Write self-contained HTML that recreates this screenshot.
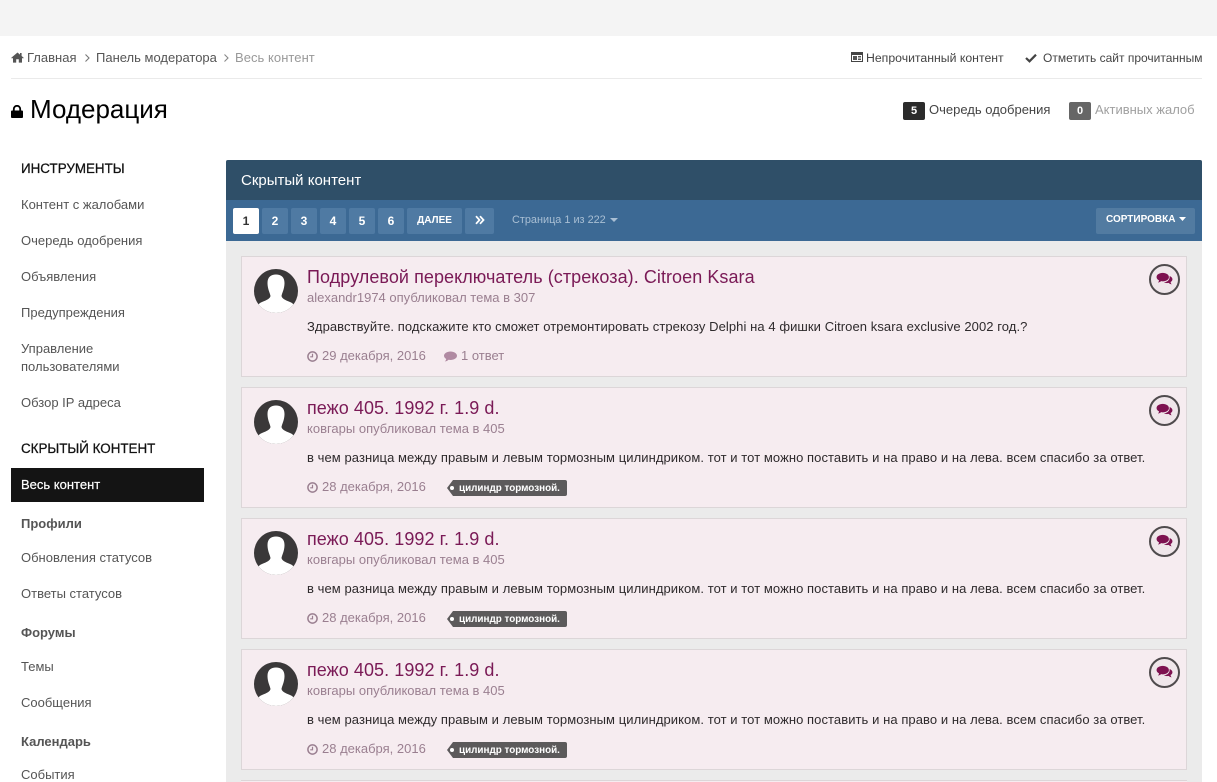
<!DOCTYPE html>
<html lang="ru">
<head>
<meta charset="utf-8">
<title>Модерация</title>
<style>
html,body{margin:0;padding:0;background:#fff;width:1217px;height:782px;overflow:hidden}
#w{position:relative;width:1217px;height:782px;overflow:hidden;font-family:"Liberation Sans",Arial,sans-serif;font-size:13px;color:#333}
.a{position:absolute;white-space:nowrap}
svg{position:absolute;display:block}
.nav{left:21px;font-size:13px;line-height:18px;color:#555}
.navh{left:21px;font-size:13.4px;line-height:18px;color:#111;-webkit-text-stroke:.25px #111}
.navb{left:21px;font-size:13px;line-height:18px;font-weight:bold;color:#555}
.pg{position:absolute;top:208px;height:26px;line-height:26px;background:#4f7aa3;border-radius:2px;color:#fff;font-weight:bold;font-size:12px;text-align:center}
.item{position:absolute;left:241px;width:944px;height:119px;background:#f6ecf0;border:1px solid #dcd6d8}
.item .t{position:absolute;left:65px;top:9px;font-size:18px;letter-spacing:.06px;line-height:22px;color:#7a1a56;white-space:nowrap}
.item .m{position:absolute;left:65px;top:33px;font-size:13px;line-height:16px;color:#9a7f90;white-space:nowrap}
.item .x{position:absolute;left:65px;top:61px;font-size:13px;letter-spacing:.07px;line-height:18px;color:#2e2a2c;white-space:nowrap}
.item .d{position:absolute;left:65px;top:90px;font-size:13px;line-height:18px;color:#9a7f90;white-space:nowrap}
.tag{position:absolute;left:211px;top:92px;height:16px;line-height:16px;width:114px;background:#5c5a5b;border-radius:0 2px 2px 0;color:#fff;font-size:9.9px;font-weight:bold;white-space:nowrap}
.tag span{position:absolute;left:6px;top:1px}
.tag:before{content:"";position:absolute;left:-6px;top:0;border-style:solid;border-width:8px 6px 8px 0;border-color:transparent #5c5a5b transparent transparent}
.tag:after{content:"";position:absolute;left:-3px;top:6px;width:4px;height:4px;border-radius:50%;background:#fff}
.av{position:absolute;left:12px;top:12px;width:44px;height:44px}
.ic{position:absolute;left:907px;top:7px;width:27px;height:27px;border:2px solid #4f4b4d;border-radius:50%;background:#efe6ea}
</style>
</head>
<body>
<div id="w">
<svg width="0" height="0" style="left:0;top:0">
  <defs>
    <clipPath id="cc"><circle cx="22" cy="22" r="22"/></clipPath>
    <symbol id="avatar" viewBox="0 0 44 44"><circle cx="22" cy="22" r="22" fill="#3a3839"/><g clip-path="url(#cc)"><path d="M13.5 14 C13.5 8 17 5.5 22 5.5 C27 5.5 30.5 8 30.5 14 C30.5 20 28 24 27.5 27 C28 29.5 31 31 36 33 C40 34.5 41 37 41 44 H3 C3 37 4 34.5 8 33 C13 31 16 29.5 16.5 27 C16 24 13.5 20 13.5 14Z" fill="#fff"/></g></symbol>
    <symbol id="clock" viewBox="0 0 11 11"><circle cx="5.5" cy="5.5" r="4.6" fill="none" stroke="#9a7f90" stroke-width="1.5"/><path d="M5.5 2.8V5.8H3.2" fill="none" stroke="#9a7f90" stroke-width="1.2"/></symbol>
    <symbol id="chat" viewBox="0 0 19 17"><path d="M7.5 1C11.5 1 14.5 3 14.5 5.8C14.5 8.6 11.5 10.6 7.5 10.6C6.9 10.6 6.3 10.5 5.7 10.4C4.8 11.2 3.6 11.8 2.2 12C2.8 11.2 3.2 10.3 3.3 9.5C1.6 8.6 0.5 7.3 0.5 5.8C0.5 3 3.5 1 7.5 1Z" fill="#7d1150"/><path d="M15.3 4.6C17.3 5.3 18.5 6.7 18.5 8.2C18.5 9.5 17.7 10.6 16.4 11.4C16.5 12.4 16.9 13.3 17.6 14C16.2 13.8 15 13.2 14.1 12.3C13.3 12.5 12.4 12.6 11.5 12.5C10.5 12.4 9.6 12.2 8.8 11.8C12.8 11.5 15.8 9 15.3 4.6Z" fill="#7d1150"/></symbol>
  </defs>
</svg>

<div class="a" style="left:0;top:0;width:1217px;height:36px;background:#f4f4f4"></div>

<!-- breadcrumb -->
<svg style="left:11px;top:52px" width="13" height="11" viewBox="0 0 13 11"><path d="M6.5 0.5 L0.3 5.8 L1 6.6 L2 5.8 V10.6 H5.2 V7.2 H7.8 V10.6 H11 V5.8 L12 6.6 L12.7 5.8 L10.6 4 V1 H9 V2.6Z" fill="#555"/></svg>
<div class="a" style="left:27px;top:49px;line-height:18px;color:#555;font-size:13px">Главная</div>
<svg style="left:84px;top:53px" width="6" height="10" viewBox="0 0 6 10"><path d="M1.5 1.5 L5 5 L1.5 8.5" fill="none" stroke="#777" stroke-width="1.1"/></svg>
<div class="a" style="left:96px;top:49px;line-height:18px;color:#555;font-size:13px">Панель модератора</div>
<svg style="left:223px;top:53px" width="6" height="10" viewBox="0 0 6 10"><path d="M1.5 1.5 L5 5 L1.5 8.5" fill="none" stroke="#888" stroke-width="1.1"/></svg>
<div class="a" style="left:235px;top:49px;line-height:18px;color:#999;font-size:13px;letter-spacing:.05px">Весь контент</div>

<svg style="left:851px;top:52px" width="12" height="10" viewBox="0 0 12 10"><rect x="0.5" y="0.5" width="11" height="9" fill="none" stroke="#444"/><rect x="0" y="0" width="12" height="3" fill="#444"/><rect x="2" y="4" width="4" height="4" fill="#555"/><path d="M7 4.5h3M7 6h3M7 7.5h3" stroke="#555"/></svg>
<div class="a" style="left:866px;top:49px;line-height:18px;color:#444;font-size:12.27px">Непрочитанный контент</div>
<svg style="left:1025px;top:53px" width="12" height="10" viewBox="0 0 12 10"><path d="M1 5 L4.5 8.3 L11 1.7" fill="none" stroke="#444" stroke-width="2.2"/></svg>
<div class="a" style="left:1043px;top:49px;line-height:18px;color:#444;font-size:12px">Отметить сайт прочитанным</div>
<div class="a" style="left:11px;top:78px;width:1191px;height:1px;background:#eaeaea"></div>

<!-- title -->
<svg style="left:11px;top:105px" width="12" height="13" viewBox="0 0 12 13"><path d="M2.8 6 V4 A3.2 3.2 0 0 1 9.2 4 V6" fill="none" stroke="#000" stroke-width="1.8"/><rect x="0" y="5.5" width="12" height="7.5" rx="1" fill="#000"/></svg>
<div class="a" style="left:30px;top:93px;font-size:26px;line-height:32px;color:#000">Модерация</div>

<div class="a" style="left:903px;top:102px;width:22px;height:18px;line-height:18px;background:#2b2b2b;border-radius:2px;color:#fff;font-weight:bold;font-size:11px;text-align:center">5</div>
<div class="a" style="left:929px;top:101px;line-height:18px;color:#444;font-size:13px">Очередь одобрения</div>
<div class="a" style="left:1069px;top:102px;width:22px;height:18px;line-height:18px;background:#666;border-radius:2px;color:#fff;font-weight:bold;font-size:11px;text-align:center">0</div>
<div class="a" style="left:1095px;top:101px;line-height:18px;color:#a0a0a0;font-size:13px">Активных жалоб</div>

<!-- sidebar -->
<div class="a navh" style="top:160px">ИНСТРУМЕНТЫ</div>
<div class="a nav" style="top:196px">Контент с жалобами</div>
<div class="a nav" style="top:232px">Очередь одобрения</div>
<div class="a nav" style="top:268px">Объявления</div>
<div class="a nav" style="top:304px">Предупреждения</div>
<div class="a nav" style="top:340px">Управление</div>
<div class="a nav" style="top:358px">пользователями</div>
<div class="a nav" style="top:394px">Обзор IP адреса</div>
<div class="a navh" style="top:440px">СКРЫТЫЙ КОНТЕНТ</div>
<div class="a" style="left:11px;top:468px;width:193px;height:34px;background:#141414"></div>
<div class="a" style="left:21px;top:476px;line-height:18px;color:#fff;font-size:13px;-webkit-text-stroke:.2px #fff">Весь контент</div>
<div class="a navb" style="top:515px">Профили</div>
<div class="a nav" style="top:549px">Обновления статусов</div>
<div class="a nav" style="top:585px">Ответы статусов</div>
<div class="a navb" style="top:624px">Форумы</div>
<div class="a nav" style="top:658px">Темы</div>
<div class="a nav" style="top:694px">Сообщения</div>
<div class="a navb" style="top:733px">Календарь</div>
<div class="a nav" style="top:768px;line-height:14px;height:14px;overflow:hidden">События</div>

<!-- panel -->
<div class="a" style="left:226px;top:160px;width:976px;height:622px;background:#ebebeb"></div>
<div class="a" style="left:226px;top:160px;width:976px;height:40px;background:#2f4f68;border-radius:2px 2px 0 0"></div>
<div class="a" style="left:241px;top:172px;font-size:15px;line-height:18px;color:#fff">Скрытый контент</div>
<div class="a" style="left:226px;top:200px;width:976px;height:41px;background:#3c6994"></div>
<div class="pg" style="left:233px;width:26px;background:#fff;color:#333">1</div>
<div class="pg" style="left:262px;width:26px">2</div>
<div class="pg" style="left:291px;width:26px">3</div>
<div class="pg" style="left:320px;width:26px">4</div>
<div class="pg" style="left:349px;width:26px">5</div>
<div class="pg" style="left:378px;width:26px">6</div>
<div class="pg" style="left:407px;width:55px;font-size:10px;line-height:26px">ДАЛЕЕ</div>
<div class="pg" style="left:465px;width:29px"></div>
<svg style="left:475px;top:215px" width="10" height="10" viewBox="0 0 10 10"><path d="M1 1.2 L4.5 5 L1 8.8 M5 1.2 L8.5 5 L5 8.8" fill="none" stroke="#fff" stroke-width="1.8"/></svg>
<div class="a" style="left:512px;top:212px;line-height:16px;font-size:10.9px;color:#a9bfd4">Страница 1 из 222</div>
<svg style="left:610px;top:218px" width="8" height="4" viewBox="0 0 8 4"><path d="M0 0H8L4 4Z" fill="#a9bfd4"/></svg>
<div class="pg" style="left:1096px;width:99px;font-size:10px;line-height:24px;background:#527ba1;text-align:left"><span style="position:absolute;left:10px;top:0">СОРТИРОВКА</span></div>
<svg style="left:1179px;top:217px" width="7" height="4" viewBox="0 0 7 4"><path d="M0 0H7L3.5 4Z" fill="#fff"/></svg>

<!-- items -->
<div class="item" style="top:256px">
  <svg class="av" width="44" height="44"><use href="#avatar"/></svg>
  <div class="t">Подрулевой переключатель (стрекоза). Citroen Ksara</div>
  <div class="m">alexandr1974 опубликовал тема в 307</div>
  <div class="x">Здравствуйте. подскажите кто сможет отремонтировать стрекозу Delphi на 4 фишки Citroen ksara exclusive 2002 год.?</div>
  <div class="d"><svg style="left:0;top:4px" width="11" height="11"><use href="#clock"/></svg><span style="margin-left:15px">29 декабря, 2016</span><svg style="left:137px;top:4px" width="13" height="11" viewBox="0 0 13 11"><path d="M6.5 0.5C10 0.5 13 2.3 13 4.8C13 7.3 10 9 6.5 9C5.8 9 5.2 9 4.6 8.8C3.6 9.8 2.2 10.4 0.8 10.5C1.6 9.7 2.1 8.8 2.2 8C0.8 7.2 0 6 0 4.8C0 2.3 3 0.5 6.5 0.5Z" fill="#b08aa2"/></svg><span style="position:absolute;left:154px;top:0">1 ответ</span></div>
  <div class="ic"><svg style="left:5px;top:6px" width="17" height="15"><use href="#chat"/></svg></div>
</div>

<div class="item" style="top:387px">
  <svg class="av" width="44" height="44"><use href="#avatar"/></svg>
  <div class="t">пежо 405. 1992 г. 1.9 d.</div>
  <div class="m">ковгары опубликовал тема в 405</div>
  <div class="x">в чем разница между правым и левым тормозным цилиндриком. тот и тот можно поставить и на право и на лева. всем спасибо за ответ.</div>
  <div class="d"><svg style="left:0;top:4px" width="11" height="11"><use href="#clock"/></svg><span style="margin-left:15px">28 декабря, 2016</span></div>
  <div class="tag"><span>цилиндр тормозной.</span></div>
  <div class="ic"><svg style="left:5px;top:6px" width="17" height="15"><use href="#chat"/></svg></div>
</div>

<div class="item" style="top:518px">
  <svg class="av" width="44" height="44"><use href="#avatar"/></svg>
  <div class="t">пежо 405. 1992 г. 1.9 d.</div>
  <div class="m">ковгары опубликовал тема в 405</div>
  <div class="x">в чем разница между правым и левым тормозным цилиндриком. тот и тот можно поставить и на право и на лева. всем спасибо за ответ.</div>
  <div class="d"><svg style="left:0;top:4px" width="11" height="11"><use href="#clock"/></svg><span style="margin-left:15px">28 декабря, 2016</span></div>
  <div class="tag"><span>цилиндр тормозной.</span></div>
  <div class="ic"><svg style="left:5px;top:6px" width="17" height="15"><use href="#chat"/></svg></div>
</div>

<div class="item" style="top:649px">
  <svg class="av" width="44" height="44"><use href="#avatar"/></svg>
  <div class="t">пежо 405. 1992 г. 1.9 d.</div>
  <div class="m">ковгары опубликовал тема в 405</div>
  <div class="x">в чем разница между правым и левым тормозным цилиндриком. тот и тот можно поставить и на право и на лева. всем спасибо за ответ.</div>
  <div class="d"><svg style="left:0;top:4px" width="11" height="11"><use href="#clock"/></svg><span style="margin-left:15px">28 декабря, 2016</span></div>
  <div class="tag"><span>цилиндр тормозной.</span></div>
  <div class="ic"><svg style="left:5px;top:6px" width="17" height="15"><use href="#chat"/></svg></div>
</div>

<div class="a" style="left:241px;top:780px;width:946px;height:2px;background:#f6ecf0;border-top:1px solid #dcd6d8;box-sizing:border-box"></div>
</div>
</body>
</html>
